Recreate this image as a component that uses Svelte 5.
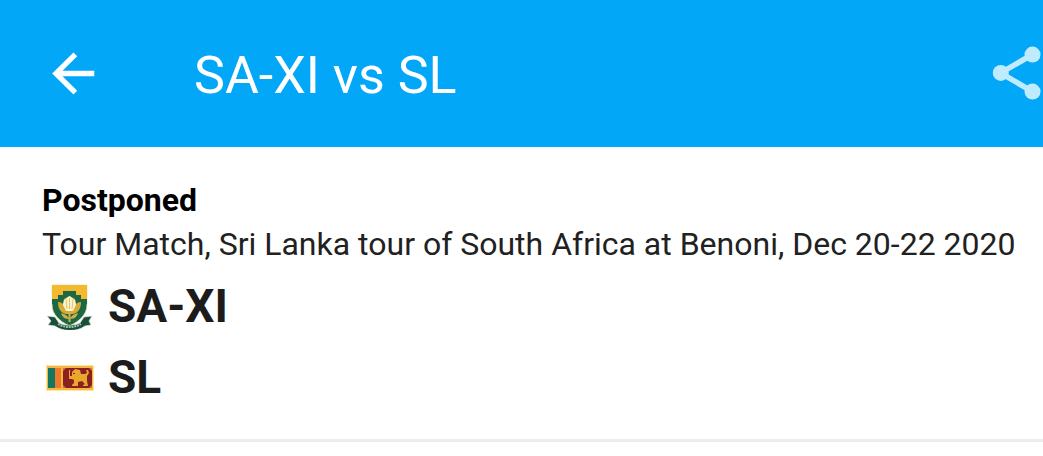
<script>
  const match = {
    title: 'SA-XI vs SL',
    status: 'Postponed',
    info: 'Tour Match, Sri Lanka tour of South Africa at Benoni, Dec 20-22 2020',
    teams: [
      { name: 'SA-XI', logo: 'protea' },
      { name: 'SL', logo: 'lanka' }
    ]
  };
</script>

<header class="toolbar">
  <button class="icon-button" type="button" aria-label="Back">
    <svg viewBox="0 0 24 24" aria-hidden="true">
      <path fill="#fff" d="M19.6 10.8H7.7l5.5-5.5L11.8 3.9l-8 7.9 8 7.9 1.4-1.4-5.5-5.5h11.9z" />
    </svg>
  </button>
  <h1>{match.title}</h1>
  <button class="icon-button share" type="button" aria-label="Share">
    <svg viewBox="0 0 24 24" aria-hidden="true">
      <path fill="none" stroke="#bfebff" stroke-width="2.1" d="M18.2 4.7l-12 6.9 12 7" />
      <circle cx="18.2" cy="4.7" r="3" fill="#bfebff" />
      <circle cx="6.3" cy="11.6" r="3" fill="#bfebff" />
      <circle cx="18.2" cy="18.6" r="3" fill="#bfebff" />
    </svg>
  </button>
</header>

<main class="summary">
  <p class="status">{match.status}</p>
  <p class="info">{match.info}</p>
  <ul class="teams">
    {#each match.teams as team}
      <li>
        {#if team.logo === 'protea'}
          <svg class="logo" viewBox="0 0 48 48" aria-hidden="true">
            <path fill="#1c6844" stroke="#e8e3bd" stroke-width=".8" d="M6 3h35v20c0 9-7 16-17.500 21C13 39 6 32 6 23z" />
            <path fill="#f5b92f" d="M6 3h35v14h-6v-4h-5V9H17v4h-5v4H6z" />
            <path fill="#1c6844" d="M6 17h6v-4h5V9h13v4h5v4h6v5H6z" />
            <path fill="#d6ab34" d="M12 20c3 0 4 1 5 2l1-5 5.500-3 5.500 3 1 5c1-1 2-2 5-2 0 7-3 11-8 12h-7c-5-1-8-5-8-12z" />
            <path fill="#fbf3d0" d="M18 18l5.500-4 5.500 4 1 5-3 6h-7l-3-6z" />
            <path fill="none" stroke="#dcb649" stroke-width=".8" d="M20 17l1 10M23.500 16v11M27 17l-1 10" />
            <path fill="#d5b04a" d="M22.500 30h2v10h-2zM23 37c-5 0-7-3-8-6 4 1 7 3 8 6zM24 37c5 0 7-3 8-6-4 1-7 3-8 6z" />
            <path fill="#174f38" stroke="#dfe7d8" stroke-width=".7" d="M1 34l8 1 4 6c6 3 15 3 21 0l4-6 8-1-3 5 2 4-6 1c-8 6-22 6-30 0l-7-1 3-4z" />
            <path fill="none" stroke="#a9bdac" stroke-width="2" stroke-dasharray="2 .8" d="M12 42c7 4 16 4 23 0" />
          </svg>
        {:else}
          <svg class="logo" viewBox="0 0 48 48" aria-hidden="true">
            <path fill="#ffe6a0" d="M0 12h48v26H0z" />
            <path fill="#f3b943" d="M1 13h46v24H1z" />
            <path fill="#147660" d="M2 15h7v20H2z" />
            <path fill="#ed7929" d="M9 15h6v20H9z" />
            <path fill="#8b2020" d="M17 15h29v20H17z" />
            <path fill="#cb7a2c" d="M17 15h3l-3 3zM46 15h-3l3 3zM17 35h3l-3-3zM46 35h-3l3-3z" />
            <path
              fill="#eaa72e"
              d="M23 17h1v6h2v-4l3-3 5 1 1 4h4l2-1-1-3h2l1 3-2 3v5l1 5h-5v-1l2-1-3-3-4 1v4h-6v-1l2-2v-3l-2-1h-3z"
            />
            <path fill="#8b2020" d="M27 20h2v1h-2z" />
          </svg>
        {/if}
        <span>{team.name}</span>
      </li>
    {/each}
  </ul>
</main>

<style>
  :global(body) {
    background: #fff;
    color: #212121;
    font-family: Roboto, sans-serif;
  }

  .toolbar {
    display: flex;
    align-items: center;
    box-sizing: border-box;
    height: 147px;
    padding-left: 42px;
    overflow: hidden;
    background: #02a7f7;
  }

  h1 {
    flex: 1;
    margin: 0 0 0 88px;
    padding-top: 4px;
    color: #fff;
    font-size: 52px;
    font-weight: 400;
    line-height: 60px;
    white-space: nowrap;
  }

  .icon-button {
    flex: none;
    width: 64px;
    height: 64px;
    padding: 0;
    border: 0;
    background: none;
    cursor: pointer;
  }

  .icon-button svg {
    display: block;
    width: 100%;
    height: 100%;
  }

  /* the last action runs slightly past the window's edge */
  .share {
    margin-right: -5px;
  }

  .summary {
    padding: 31px 28px 27px 42px;
    border-bottom: 3px solid #ececec;
  }

  p {
    margin: 0;
    font-size: 32px;
    line-height: 44px;
  }

  .status {
    color: #000;
    font-weight: 700;
  }

  .info {
    white-space: nowrap;
  }

  .teams {
    margin: 0;
    padding: 4px 0 0;
    list-style: none;
  }

  li {
    display: flex;
    align-items: center;
    gap: 14px;
    height: 71px;
    padding-left: 4px;
    color: #1c1c1c;
    font-size: 46px;
    font-weight: 700;
  }

  .logo {
    flex: none;
    width: 48px;
    height: 48px;
  }
</style>
